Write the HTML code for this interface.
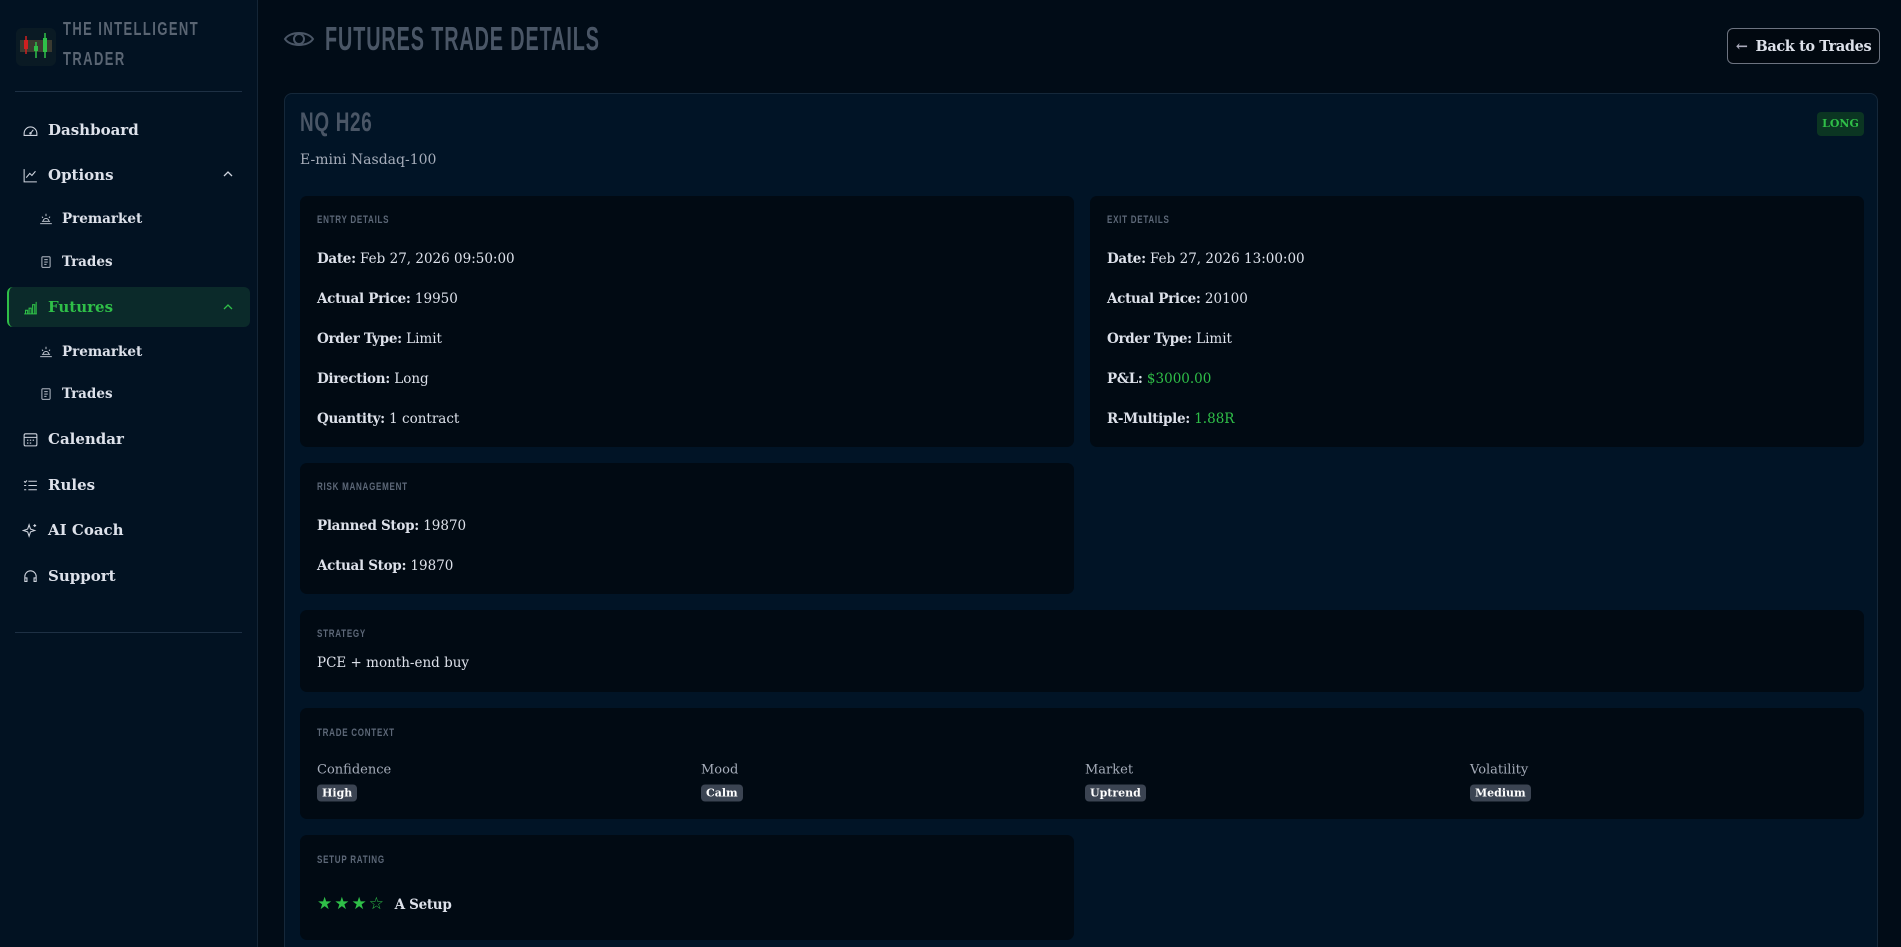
<!DOCTYPE html>
<html><head><meta charset="utf-8"><style>
*{box-sizing:border-box;margin:0;padding:0}
html{width:1901px;height:947px;overflow:hidden}
body{width:1901px;height:947px;overflow:hidden;background:#010c17;font-family:"DejaVu Serif","Liberation Serif",serif;color:#dde1ea;position:relative}
.cond{font-family:"Liberation Sans","DejaVu Sans",sans-serif;font-weight:bold;letter-spacing:1px}
.sb{position:absolute;left:0;top:0;width:258px;height:947px;background:#021222;border-right:1px solid #142536}
.abs{position:absolute}
.nav{position:absolute;left:22px;font-size:15px;font-weight:bold;color:#dde1ea;display:flex;align-items:center;gap:9px;transform:translateY(-50%)}
.sub{left:39px;font-size:13.5px}
.nav svg{width:17px;height:17px;stroke:#cfd4de;fill:none;stroke-width:1.5}
.sub svg{width:14px;height:14px}
.hr{position:absolute;left:15px;width:227px;height:1px;background:#1e3044}
.card{position:absolute;left:284px;top:93px;width:1594px;height:854px;background:#011426;border:1px solid #15283a;border-bottom:none;border-radius:8px 8px 0 0}
.box{position:absolute;background:#010a13;border-radius:7px}
.lbl{position:absolute;left:17px;font-size:11px;color:#5d6878;transform:translateY(-50%) scaleX(.73);transform-origin:left center}
.row{position:absolute;left:17px;font-size:13.5px;transform:translateY(-50%);white-space:nowrap}
.row b{font-weight:bold;letter-spacing:-.3px}
.g{color:#2fbf48}
.ctx{position:absolute;font-size:13px;color:#a6adba;transform:translateY(-50%)}
.badge{position:absolute;background:#3b4452;color:#fff;font-size:11px;font-weight:bold;padding:2px 5px;border-radius:4px;transform:translateY(-50%)}
</style></head><body>
<div class="sb">
 <svg class="abs" style="left:16px;top:28px" width="40" height="38" viewBox="0 0 40 38"><rect width="40" height="38" rx="6" fill="#0a1a24"/><rect x="4" y="12" width="32" height="12" fill="#3a3a30"/><line x1="10" y1="8" x2="10" y2="26" stroke="#d02020" stroke-width="1.5"/><rect x="8" y="12" width="4" height="9" fill="#d02020"/><line x1="20" y1="14" x2="20" y2="30" stroke="#2fbf48" stroke-width="1.5"/><rect x="18" y="18" width="4" height="5" fill="#2fbf48"/><line x1="29" y1="5" x2="29" y2="30" stroke="#2fbf48" stroke-width="1.5"/><rect x="27" y="10" width="4" height="14" fill="#2fbf48"/></svg>
 <div class="abs cond" style="left:63px;top:14px;font-size:18px;line-height:30px;color:#5a6573;letter-spacing:2px;transform:scaleX(.72);transform-origin:left">THE INTELLIGENT<br>TRADER</div>
 <div class="hr" style="top:91px"></div>
 <div class="nav" style="top:130px"><svg viewBox="0 0 24 24"><path d="M3 16a9 9 0 0 1 18 0v3H3z"/><path d="M12 16l4-5"/><circle cx="12" cy="16" r="1"/></svg>Dashboard</div>
 <div class="nav" style="top:175px"><svg viewBox="0 0 24 24"><path d="M3 3v18h18"/><path d="M6 15l5-6 3 3 5-6"/></svg>Options</div>
 <svg class="abs" style="left:223px;top:170px" width="10" height="8" viewBox="0 0 10 8"><path d="M1 6l4-4 4 4" stroke="#cfd4de" fill="none" stroke-width="1.3"/></svg>
 <div class="nav sub" style="top:219px"><svg viewBox="0 0 24 24"><path d="M2 20h20M5 16h14M12 3v4M5 8l2 2M19 8l-2 2M7 16a5 5 0 0 1 10 0"/></svg>Premarket</div>
 <div class="nav sub" style="top:262px"><svg viewBox="0 0 24 24"><rect x="5" y="3" width="14" height="18" rx="1"/><path d="M9 8h6M9 12h6M9 16h4"/></svg>Trades</div>
 <div class="abs" style="left:7px;top:287px;width:243px;height:40px;background:#0b2a2a;border-left:2px solid #2fbf48;border-radius:6px"></div>
 <div class="nav" style="top:307px;color:#2fbf48"><svg viewBox="0 0 24 24" style="stroke:#2fbf48"><path d="M3 21h18M5 21v-5h3v5M10 21v-8h3v8M15 21V8h3v13M20 21V4"/></svg>Futures</div>
 <svg class="abs" style="left:223px;top:303px" width="10" height="8" viewBox="0 0 10 8"><path d="M1 6l4-4 4 4" stroke="#2fbf48" fill="none" stroke-width="1.3"/></svg>
 <div class="nav sub" style="top:352px"><svg viewBox="0 0 24 24"><path d="M2 20h20M5 16h14M12 3v4M5 8l2 2M19 8l-2 2M7 16a5 5 0 0 1 10 0"/></svg>Premarket</div>
 <div class="nav sub" style="top:394px"><svg viewBox="0 0 24 24"><rect x="5" y="3" width="14" height="18" rx="1"/><path d="M9 8h6M9 12h6M9 16h4"/></svg>Trades</div>
 <div class="nav" style="top:439px"><svg viewBox="0 0 24 24"><rect x="3" y="4" width="18" height="17" rx="2"/><path d="M3 9h18M7 13h2M11 13h2M15 13h2M7 17h2M11 17h2"/></svg>Calendar</div>
 <div class="nav" style="top:485px"><svg viewBox="0 0 24 24"><path d="M9 6h12M9 12h12M9 18h12M3 6l1.5 1.5L7 5M3 12h3M3 18h3"/></svg>Rules</div>
 <div class="nav" style="top:530px"><svg viewBox="0 0 24 24"><path d="M10 4l2 6 6 2-6 2-2 6-2-6-6-2 6-2zM18 3v4M16 5h4"/></svg>AI Coach</div>
 <div class="nav" style="top:576px"><svg viewBox="0 0 24 24"><path d="M4 14v-2a8 8 0 0 1 16 0v2M4 14h3v5H4zM17 14h3v5h-3z"/></svg>Support</div>
 <div class="hr" style="top:632px"></div>
</div>

<svg class="abs" style="left:283px;top:28px" width="32" height="22" viewBox="0 0 32 22"><path d="M2 11C7 3 25 3 30 11C25 19 7 19 2 11z" fill="none" stroke="#4a5666" stroke-width="2"/><circle cx="16" cy="11" r="5" fill="none" stroke="#4a5666" stroke-width="2"/></svg>
<div class="abs cond" style="left:325px;top:20px;font-size:33px;color:#4a5666;letter-spacing:1.5px;transform:scaleX(.6);transform-origin:left">FUTURES TRADE DETAILS</div>
<div class="abs" style="left:1727px;top:28px;width:153px;height:36px;border:1px solid #6c7380;border-radius:6px;background:#010810;display:flex;align-items:center;justify-content:center;gap:8px;font-size:14.5px;font-weight:bold;color:#dde1ea;letter-spacing:-.4px"><span style="color:#aab">&larr;</span>Back to Trades</div>

<div class="card">
 <div class="abs cond" style="left:15px;top:13px;font-size:27px;color:#4a5666;transform:scaleX(.7);transform-origin:left">NQ H26</div>
 <div class="abs" style="left:15px;top:58px;font-size:14px;color:#a6adba">E-mini Nasdaq-100</div>
 <div class="abs" style="left:1532px;top:18px;width:47px;height:24px;background:#0b3522;border-radius:4px;color:#2fbf48;font-size:11px;font-weight:bold;text-align:center;line-height:24px">LONG</div>

 <div class="box" style="left:15px;top:102px;width:774px;height:251px">
  <div class="lbl cond" style="top:24px">ENTRY DETAILS</div>
  <div class="row" style="top:63px"><b>Date:</b> Feb 27, 2026 09:50:00</div>
  <div class="row" style="top:103px"><b>Actual Price:</b> 19950</div>
  <div class="row" style="top:143px"><b>Order Type:</b> Limit</div>
  <div class="row" style="top:183px"><b>Direction:</b> Long</div>
  <div class="row" style="top:223px"><b>Quantity:</b> 1 contract</div>
 </div>
 <div class="box" style="left:805px;top:102px;width:774px;height:251px">
  <div class="lbl cond" style="top:24px">EXIT DETAILS</div>
  <div class="row" style="top:63px"><b>Date:</b> Feb 27, 2026 13:00:00</div>
  <div class="row" style="top:103px"><b>Actual Price:</b> 20100</div>
  <div class="row" style="top:143px"><b>Order Type:</b> Limit</div>
  <div class="row" style="top:183px"><b>P&amp;L:</b> <span class="g">$3000.00</span></div>
  <div class="row" style="top:223px"><b>R-Multiple:</b> <span class="g">1.88R</span></div>
 </div>
 <div class="box" style="left:15px;top:369px;width:774px;height:131px">
  <div class="lbl cond" style="top:24px">RISK MANAGEMENT</div>
  <div class="row" style="top:63px"><b>Planned Stop:</b> 19870</div>
  <div class="row" style="top:103px"><b>Actual Stop:</b> 19870</div>
 </div>
 <div class="box" style="left:15px;top:516px;width:1564px;height:82px">
  <div class="lbl cond" style="top:24px">STRATEGY</div>
  <div class="row" style="top:53px">PCE + month-end buy</div>
 </div>
 <div class="box" style="left:15px;top:614px;width:1564px;height:111px">
  <div class="lbl cond" style="top:25px">TRADE CONTEXT</div>
  <div class="ctx" style="left:17px;top:62px">Confidence</div><div class="badge" style="left:17px;top:85px">High</div>
  <div class="ctx" style="left:401px;top:62px">Mood</div><div class="badge" style="left:401px;top:85px">Calm</div>
  <div class="ctx" style="left:785px;top:62px">Market</div><div class="badge" style="left:785px;top:85px">Uptrend</div>
  <div class="ctx" style="left:1170px;top:62px">Volatility</div><div class="badge" style="left:1170px;top:85px">Medium</div>
 </div>
 <div class="box" style="left:15px;top:741px;width:774px;height:105px">
  <div class="lbl cond" style="top:25px">SETUP RATING</div>
  <div class="row" style="top:69px"><span class="g" style="font-size:17px;letter-spacing:2px">★★★☆</span> &nbsp;<b>A Setup</b></div>
 </div>
</div>
</body></html>
